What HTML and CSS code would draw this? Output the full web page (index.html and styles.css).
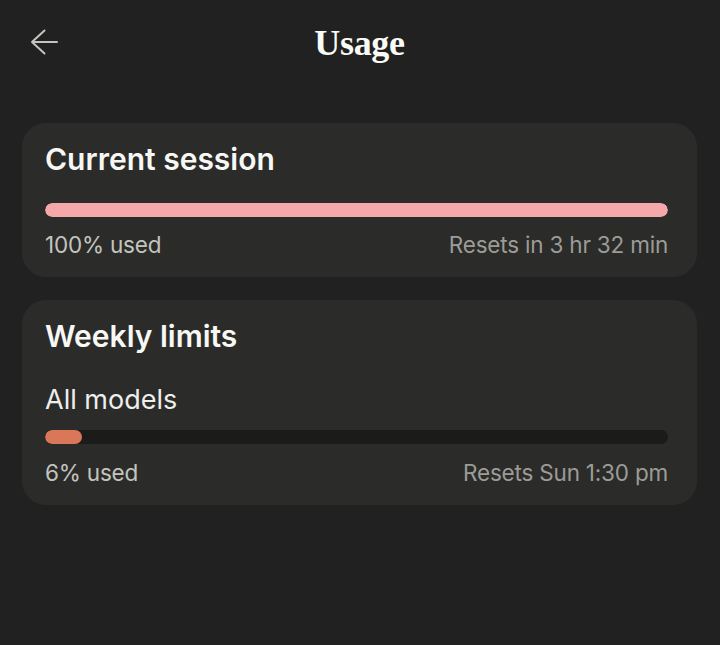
FILE: index.html
```html
<!DOCTYPE html>
<html lang="en">
<head>
    <meta charset="UTF-8">
    <meta name="viewport" content="width=device-width, initial-scale=1.0">
    <title>Usage</title>
    <link rel="stylesheet" href="styles.css">
</head>
<body>

    <div class="page">
        <!-- Top bar -->
        <div class="header">
            <a class="back" href="#">
                <svg width="30" height="26" viewBox="0 0 30 26">
                    <path d="M28 13H3M15.5 1.5L3 13l12.5 11.5" fill="none" stroke="#c4c4c0" stroke-width="2" stroke-linecap="round" stroke-linejoin="round"/>
                </svg>
            </a>
            <h1 class="title">Usage</h1>
        </div>

        <!-- Current session -->
        <div class="card">
            <h2 class="card-title">Current session</h2>
            <div class="bar bar-session">
                <div class="fill" style="width: 100%"></div>
            </div>
            <div class="meta">
                <span class="used">100% used</span>
                <span class="reset">Resets in 3 hr 32 min</span>
            </div>
        </div>

        <!-- Weekly limits -->
        <div class="card">
            <h2 class="card-title">Weekly limits</h2>
            <div class="label">All models</div>
            <div class="bar bar-weekly">
                <div class="fill" style="width: 6%"></div>
            </div>
            <div class="meta">
                <span class="used">6% used</span>
                <span class="reset">Resets Sun 1:30 pm</span>
            </div>
        </div>
    </div>

</body>
</html>
```

FILE: styles.css
```css
body, html {
    margin: 0;
    padding: 0;
    background-color: #212121;
    font-family: Inter, "Noto Sans", sans-serif;
    color: #f2f2ee;
}

.page {
    padding: 0 23px 0 22px;
}

/* Top bar */
.header {
    position: relative;
    height: 85px;
    display: flex;
    align-items: center;
    justify-content: center;
    margin-bottom: 38px;
}

.back {
    position: absolute;
    left: 7px;
    top: 29px;
    display: flex;
}

.title {
    margin: 0;
    font-family: "Liberation Serif", "DejaVu Serif", serif;
    font-size: 36px;
    font-weight: bold;
    letter-spacing: -0.3px;
    color: #fafaf7;
}

/* Cards */
.card {
    background-color: #2b2b2a;
    border-radius: 24px;
    padding: 18px 29px 17px 23px;
    margin-bottom: 23px;
}

.card-title {
    margin: 0;
    font-size: 30px;
    line-height: 36px;
    font-weight: 600;
    color: #f7f7f4;
}

.label {
    margin-top: 30px;
    font-size: 27px;
    line-height: 32px;
    color: #eeeeea;
}

.bar {
    height: 14px;
    border-radius: 7px;
    overflow: hidden;
    background-color: #1b1b1a;
}

.bar-session {
    margin-top: 26px;
}

.bar-session .fill {
    background-color: #f4a8aa;
}

.bar-weekly {
    margin-top: 14px;
}

.bar-weekly .fill {
    background-color: #d97758;
}

.fill {
    height: 100%;
    border-radius: 7px;
}

.meta {
    display: flex;
    justify-content: space-between;
    margin-top: 13px;
    font-size: 22.5px;
    line-height: 30px;
    letter-spacing: -0.2px;
}

.bar-weekly + .meta {
    margin-top: 14px;
}

.used {
    color: #c4c4bf;
}

.reset {
    color: #9c9c97;
}
```
